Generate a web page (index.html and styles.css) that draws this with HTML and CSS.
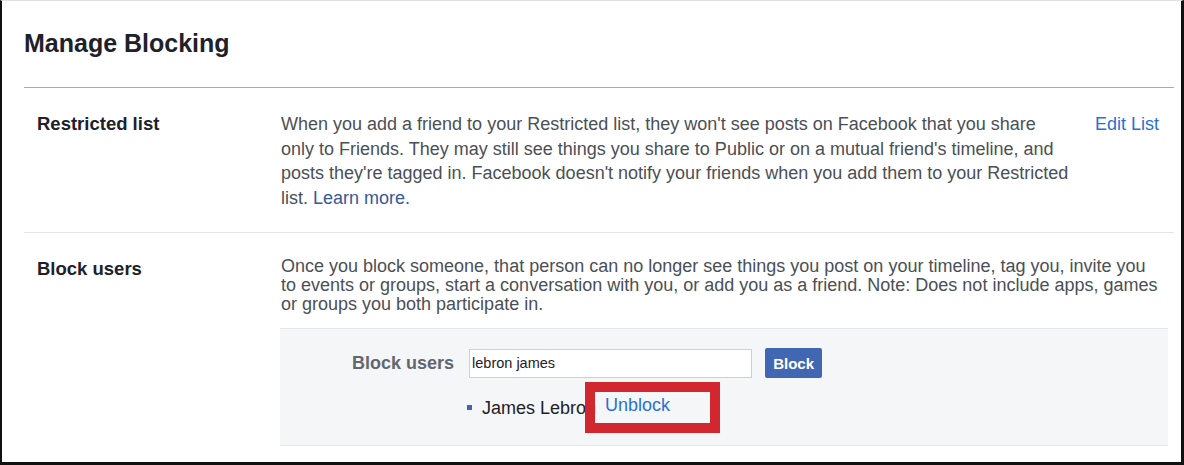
FILE: index.html
```html
<!DOCTYPE html>
<html lang="en">
<head>
    <meta charset="UTF-8">
    <title>Manage Blocking</title>
    <link rel="stylesheet" href="styles.css">
</head>
<body>
    <div class="page">
        <h2 class="title">Manage Blocking</h2>

        <div class="setting-row">
            <div class="setting-label">Restricted list</div>
            <div class="setting-body with-action">
                <p class="setting-desc">When you add a friend to your Restricted list, they won't see posts on Facebook that you share only to Friends. They may still see things you share to Public or on a mutual friend's timeline, and posts they're tagged in. Facebook doesn't notify your friends when you add them to your Restricted list. <a href="#" class="learn-more">Learn more.</a></p>
                <a href="#" class="edit-link">Edit List</a>
            </div>
        </div>

        <div class="setting-row last">
            <div class="setting-label">Block users</div>
            <div class="setting-body">
                <p class="setting-desc tight">Once you block someone, that person can no longer see things you post on your timeline, tag you, invite you to events or groups, start a conversation with you, or add you as a friend. Note: Does not include apps, games or groups you both participate in.</p>

                <div class="block-box">
                    <div class="block-form">
                        <label class="block-label" for="blockInput">Block users</label>
                        <input type="text" id="blockInput" class="block-input" value="lebron james">
                        <button class="block-btn">Block</button>
                    </div>
                    <ul class="blocked-list">
                        <li><span class="blocked-name">James Lebron</span><a href="#" class="unblock-link">Unblock</a></li>
                    </ul>
                    <div class="highlight"></div>
                </div>
            </div>
        </div>
    </div>
</body>
</html>
```

FILE: styles.css
```css
body {
    margin: 0;
    font-family: 'Liberation Sans', Arial, sans-serif;
    background: #fff;
}
.page {
    height: 465px;
    box-sizing: border-box;
    border-top: 1px solid #e2e2e2;
    border-left: 2px solid #111;
    border-right: 3px solid #111;
    border-bottom: 3px solid #111;
    padding: 0 7px 0 22px;
    overflow: hidden;
}
.title {
    margin: 0;
    padding: 27px 0 0 0;
    font-size: 25px;
    line-height: 30px;
    font-weight: bold;
    color: #1d2129;
    box-sizing: border-box;
    border-bottom: 1px solid #a9a9a9;
    height: 87px;
}
.setting-row {
    display: flex;
    padding: 24px 6px 22px 13px;
    border-bottom: 1px solid #e5e5e5;
}
.setting-row.last {
    border-bottom: none;
}
.setting-label {
    width: 244px;
    flex-shrink: 0;
    font-size: 18.5px;
    line-height: 24px;
    font-weight: bold;
    color: #1d2129;
}
.setting-body {
    flex: 1;
    min-width: 0;
}
.setting-body.with-action {
    display: flex;
    align-items: flex-start;
}
.setting-desc {
    margin: 0;
    flex: 1;
    font-size: 18px;
    line-height: 24.6px;
    color: #4b4f56;
}
.setting-desc.tight {
    line-height: 19px;
    margin-right: 5px;
}
.learn-more {
    color: #365899;
    text-decoration: none;
}
.edit-link {
    flex-shrink: 0;
    width: 73px;
    margin-left: 24px;
    font-size: 18px;
    line-height: 24.6px;
    color: #2a6fd6;
    text-decoration: none;
    white-space: nowrap;
}
.block-box {
    position: relative;
    margin: 14px 0 0 -1px;
    padding: 19px 0 26px 0;
    background: #f5f6f7;
    border-top: 1px solid #e5e6e9;
    border-bottom: 1px solid #e5e6e9;
}
.block-form {
    display: flex;
    align-items: center;
    padding-left: 72px;
}
.block-label {
    font-size: 18px;
    font-weight: bold;
    color: #606770;
    margin-right: 15px;
}
.block-input {
    width: 283px;
    height: 29px;
    box-sizing: border-box;
    border: 1px solid #ccd0d5;
    padding: 0 2px;
    font-family: 'Liberation Sans', Arial, sans-serif;
    font-size: 14.5px;
    color: #1d2129;
    background: #fff;
}
.block-btn {
    margin-left: 13px;
    width: 57px;
    height: 30px;
    border: none;
    border-radius: 2px;
    background: #4267b2;
    color: #fff;
    font-family: 'Liberation Sans', Arial, sans-serif;
    font-size: 15px;
    font-weight: bold;
    padding: 0;
}
.blocked-list {
    list-style: none;
    margin: 16px 0 0 0;
    padding-left: 187px;
}
.blocked-list li {
    font-size: 18px;
    line-height: 22px;
    color: #1d2129;
}
.blocked-list li::before {
    content: '';
    display: inline-block;
    width: 5px;
    height: 5px;
    background: #4267b2;
    margin-right: 10px;
    vertical-align: 4px;
}
.unblock-link {
    margin-left: 9px;
    color: #2a6fd6;
    text-decoration: none;
    vertical-align: 3px;
}
.highlight {
    position: absolute;
    left: 305px;
    top: 53px;
    width: 135px;
    height: 51px;
    box-sizing: border-box;
    border: 10px solid #d0282e;
}
```
